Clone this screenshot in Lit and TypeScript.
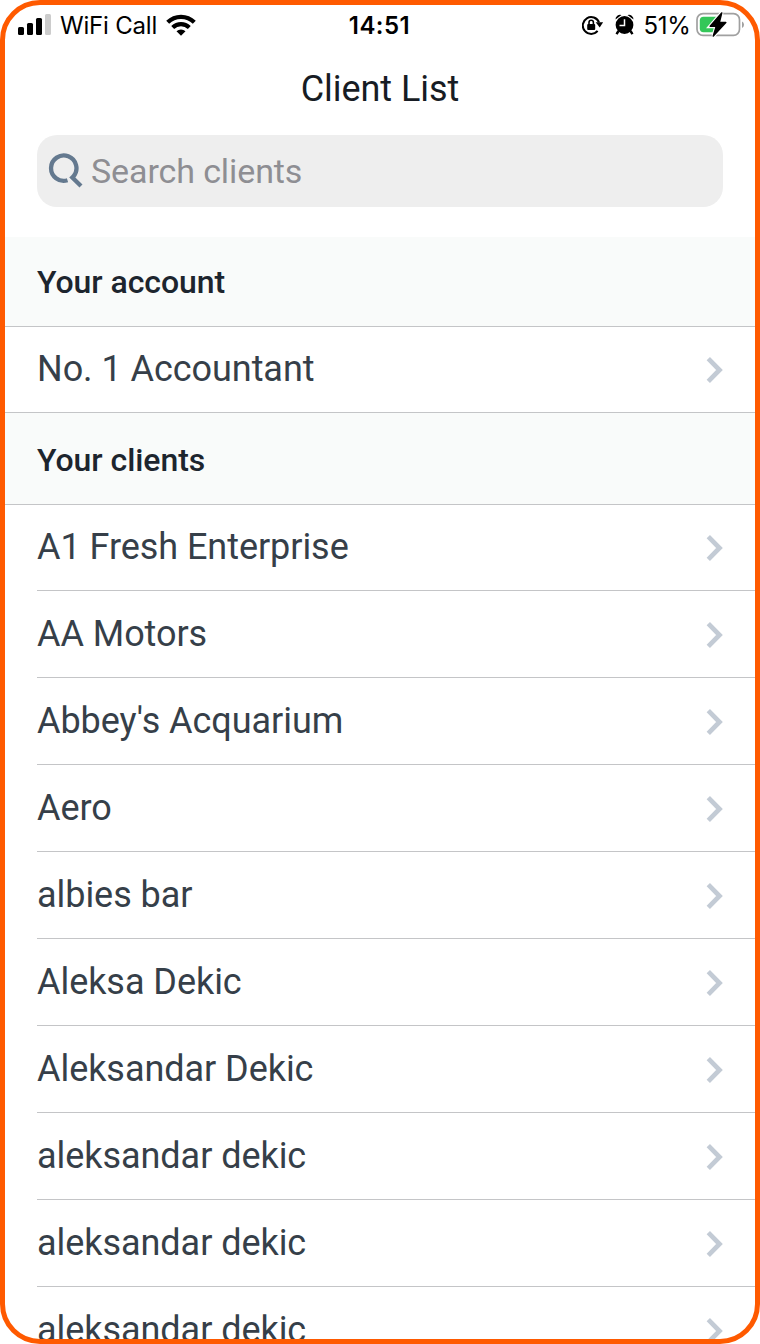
import { LitElement, html, css } from "lit";
import { customElement, property } from "lit/decorators.js";

@customElement("status-bar")
class StatusBar extends LitElement {
  static styles = css`
    :host { display: flex; height: 43px; padding: 0 10px 0 13px; justify-content: space-between; font: 400 24px/42px Inter, sans-serif; color: #000; }
    .side { display: flex; align-items: flex-start; flex: 1 1 0; white-space: nowrap; }
    .right { justify-content: flex-end; }
    .time { font-weight: 600; letter-spacing: 0.5px; padding-right: 4px; }
    .carrier { margin-left: 9px; letter-spacing: -0.2px; }
    .percent { margin-left: 10px; margin-right: 5.400px; letter-spacing: -0.3px; }
    svg { display: block; height: 40px; flex: none; }
    .wifi { margin-left: 9px; }
    .alarm { margin-left: 11px; }
  `;
  render() {
    return html`
      <div class="side">
        <svg width="33" height="40" viewBox="18 5 33 40">
          <rect x="18" y="27" width="6" height="8" rx="1.5" />
          <rect x="27" y="23" width="6" height="12" rx="1.5" />
          <rect x="36" y="18" width="6" height="17" rx="1.5" />
          <rect x="45" y="14" width="6" height="21" rx="1.5" fill="#ccc" />
        </svg>
        <span class="carrier">WiFi Call</span>
        <svg class="wifi" width="30" height="40" viewBox="166.500 5 30 40">
          <g fill="none" stroke="#000" stroke-width="4.200">
            <path d="M168.200 22.300a19 19 0 0 1 26.600 0" />
            <path d="M173.200 27.400a12 12 0 0 1 16.600 0" />
          </g>
          <path d="M177 31.200a6.500 6.500 0 0 1 9 0l-4.500 4.600z" />
        </svg>
      </div>
      <div class="time">14:51</div>
      <div class="side right">
        <svg width="22" height="40" viewBox="582 5 22 40">
          <path d="M597.600 30.900A8.400 8.400 0 1 1 599 22.400" fill="none" stroke="#000" stroke-width="2" />
          <path d="M595.700 22.300h7.400l-3.400 5.200z" />
          <rect x="587.200" y="24" width="8" height="6" rx="1" />
          <path d="M589 24.500v-2a2.200 2.200 0 0 1 4.400 0v2" fill="none" stroke="#000" stroke-width="1.600" />
        </svg>
        <svg class="alarm" width="19" height="40" viewBox="614.500 5 19 40">
          <circle cx="624" cy="25" r="8.900" />
          <path d="M615 19.500a4.500 4.500 0 0 1 6-4.500zM633 19.500a4.500 4.500 0 0 0-6-4.500z" />
          <path d="M618 31l-2 3.200M630 31l2 3.200" stroke="#000" stroke-width="2.400" />
          <path d="M624 19.300v6.200h-5" fill="none" stroke="#fff" stroke-width="1.500" />
        </svg>
        <span class="percent">51%</span>
        <svg width="49" height="40" viewBox="696 5 49 40">
          <rect x="697" y="13.700" width="42.500" height="21.600" rx="6" fill="none" stroke="#a0a0a0" stroke-width="1.700" />
          <path d="M742 21.500q2 .8 2 3.200t-2 3.200z" fill="#a0a0a0" />
          <path d="M703.500 16.700H718v15.500h-14.500q-3.700 0-3.700-3.700v-8q0-3.800 3.700-3.800z" fill="#34c759" />
          <path d="M721.700 13L710.200 26.300H716.300L713.300 36L725.800 22.500H719.300z" fill="#fff" stroke="#fff" stroke-width="3.800" />
          <path d="M721.700 13L710.200 26.300H716.300L713.300 36L725.800 22.500H719.300z" stroke="#000" stroke-width="1.500" stroke-linejoin="round" />
        </svg>
      </div>`;
  }
}

@customElement("client-row")
class ClientRow extends LitElement {
  @property() name = "";
  static styles = css`
    :host { display: flex; box-sizing: border-box; height: 87px; padding: 22px 32px 0 0; align-items: flex-start; justify-content: space-between; border-bottom: 1px solid #c4c5c7; }
    .name { font: 400 36px/42px Roboto, sans-serif; letter-spacing: -0.050px; color: #363f49; white-space: nowrap; }
    svg { display: block; margin-top: 8px; }
  `;
  render() {
    return html`<span class="name">${this.name}</span>
      <svg width="17" height="28" viewBox="0 0 17 28"><path d="M2.300 2.700L13.500 14L2.300 25.300" fill="none" stroke="#c3cbd5" stroke-width="4.700" /></svg>`;
  }
}

@customElement("app-root")
class AppRoot extends LitElement {
  clients = ["A1 Fresh Enterprise", "AA Motors", "Abbey's Acquarium", "Aero", "albies bar", "Aleksa Dekic", "Aleksandar Dekic", "aleksandar dekic", "aleksandar dekic", "aleksandar dekic"];
  static styles = css`
    :host { display: block; background: #fff; }
    .screen { box-sizing: border-box; width: 760px; height: 1344px; border: 5px solid #ff5a00; border-radius: 40px; overflow: hidden; background: #fff; font-family: Roboto, sans-serif; }
    .title { margin: 0; height: 82px; font-size: 36px; font-weight: 400; line-height: 82px; text-align: center; color: #171c24; letter-spacing: -0.050px; }
    .search { display: flex; align-items: center; box-sizing: border-box; height: 72px; margin: 5px 32px 30px; padding-left: 11px; border-radius: 20px; background: #eee; color: #8e8e93; font-size: 34px; letter-spacing: -0.1px; }
    .search svg { margin-right: 8px; }
    .section { box-sizing: border-box; height: 90px; padding: 0 32px; margin: 0; background: #f9fbfa; border-bottom: 1px solid #c4c5c7; font-size: 32px; font-weight: 500; line-height: 90px; color: #1d252e; letter-spacing: -0.050px; }
    .clients { height: 92px; line-height: 94px; }
    .own { height: 86px; padding: 21px 32px 0; }
    .list { padding-left: 32px; }
    .first { height: 86px; padding-top: 21px; }
  `;
  render() {
    return html`<main class="screen">
      <status-bar></status-bar>
      <h1 class="title">Client List</h1>
      <div class="search">
        <svg width="35" height="36" viewBox="48 153 35 36"><path d="M67.500 180.300A12.700 12.700 0 1 1 73.500 176.300L72.300 177.500L81 186" fill="none" stroke="#64798f" stroke-width="4.300" /></svg>
        <span>Search clients</span>
      </div>
      <h2 class="section">Your account</h2>
      <client-row class="own" name="No. 1 Accountant"></client-row>
      <h2 class="section clients">Your clients</h2>
      <div class="list">${this.clients.map((c, i) => html`<client-row class=${i === 0 ? "first" : ""} name=${c}></client-row>`)}</div>
    </main>`;
  }
}
